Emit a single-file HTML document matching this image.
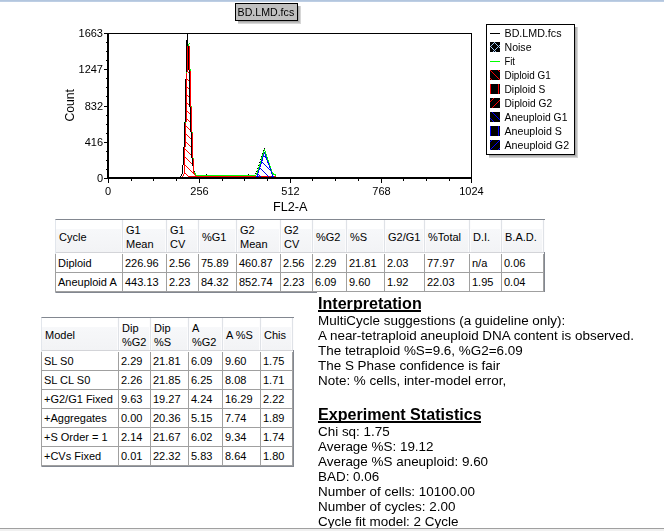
<!DOCTYPE html>
<html><head><meta charset="utf-8"><title>BD.LMD.fcs</title>
<style>
html,body{margin:0;padding:0;background:#fff;}
body{width:664px;height:531px;position:relative;overflow:hidden;font-family:"Liberation Sans",Arial,sans-serif;color:#000;}
.top{position:absolute;left:0;top:0;width:664px;height:2px;background:linear-gradient(#b3c6de 0,#b3c6de 50%,#bdcee4 50%,#bdcee4 100%);}
.bot1{position:absolute;left:0;top:528px;width:664px;height:1px;background:#a0a0a0;}
.bot2{position:absolute;left:0;top:529px;width:664px;height:2px;background:#f0f0f0;}
.lv{position:absolute;background:#fff;border-top:1px solid #828790;border-left:1px solid #e2e6ec;border-right:1px solid #828790;border-bottom:1px solid #828790;box-sizing:border-box;font-size:11px;line-height:14px;}
.hd{position:absolute;left:0;top:0;background:linear-gradient(#fff 0,#fff 28%,#f7f8fa 28%,#f2f3f5 100%);border-bottom:1px solid #d3d4d8;box-sizing:border-box;}
.hc{position:absolute;top:0;height:100%;box-sizing:border-box;border-right:1px solid #dfe2e7;box-shadow:1px 0 0 #fcfcfd, inset -1px 0 0 #fcfcfd;display:flex;align-items:center;padding:2px 0 0 3px;}
.c{position:absolute;box-sizing:border-box;border-right:1px solid #a0a0a0;border-bottom:1px solid #a0a0a0;padding:2px 0 0 2px;white-space:nowrap;overflow:hidden;}
.gl{position:absolute;background:#a0a0a0;}
.gb{position:absolute;background:#d0d0d0;}
.b{font-size:13.45px;}
.h{font-size:16.1px;font-weight:bold;}
</style></head><body>
<div class="top"></div>
<svg width="664" height="215" viewBox="0 0 664 215" style="position:absolute;left:0;top:0;will-change:transform" shape-rendering="crispEdges" font-family="Liberation Sans, Arial, sans-serif" font-size="11" fill="#000">
<defs><pattern id="hr" width="8" height="8" patternUnits="userSpaceOnUse"><rect x="0" y="4" width="1" height="1" fill="#f00"/><rect x="1" y="5" width="1" height="1" fill="#f00"/><rect x="2" y="6" width="1" height="1" fill="#f00"/><rect x="3" y="7" width="1" height="1" fill="#f00"/><rect x="4" y="0" width="1" height="1" fill="#f00"/><rect x="5" y="1" width="1" height="1" fill="#f00"/><rect x="6" y="2" width="1" height="1" fill="#f00"/><rect x="7" y="3" width="1" height="1" fill="#f00"/></pattern><pattern id="hb" width="8" height="8" patternUnits="userSpaceOnUse"><rect x="0" y="4" width="1" height="1" fill="#00f"/><rect x="1" y="5" width="1" height="1" fill="#00f"/><rect x="2" y="6" width="1" height="1" fill="#00f"/><rect x="3" y="7" width="1" height="1" fill="#00f"/><rect x="4" y="0" width="1" height="1" fill="#00f"/><rect x="5" y="1" width="1" height="1" fill="#00f"/><rect x="6" y="2" width="1" height="1" fill="#00f"/><rect x="7" y="3" width="1" height="1" fill="#00f"/></pattern></defs>
<polygon points="186,72 186,122 185,122 185,147 184,147 184,174 183,174 183,176 182,176 182,177 197,177 197,176 196,176 196,175 195,175 195,173 194,173 194,158 193,158 193,132 192,132 192,107 191,107 191,72" fill="url(#hr)"/>
<path fill="#000" d="M180 176h1v1h-1zM181 174h1v2h-1zM182 165h1v9h-1zM183 147h1v18h-1zM184 122h1v25h-1zM185 79h1v43h-1zM186 40h1v32h-1zM187 34h1v12h-1zM188 46h1v24h-1zM189 70h1v37h-1zM190 107h1v25h-1zM191 132h1v26h-1zM192 158h1v8h-1zM194 171h1v1h-1zM206 174h1v1h-1zM248 174h1v1h-1z"/>
<path fill="#f00" d="M182 176h1v1h-1zM183 174h1v2h-1zM184 147h1v27h-1zM185 123h1v24h-1zM186 73h1v49h-1zM187 46h1v26h-1zM188 176h88v1h-88zM189 46h1v24h-1zM190 71h1v36h-1zM191 107h1v25h-1zM192 133h1v25h-1zM193 159h1v14h-1zM194 173h1v2h-1zM195 175h1v1h-1z"/>
<path fill="#0f0" d="M185 122h1v1h-1zM186 72h1v1h-1zM188 44h1v2h-1zM189 43h1v1h-1zM190 69h1v2h-1zM191 106h1v1h-1zM192 132h1v1h-1zM193 158h1v1h-1zM194 172h1v1h-1zM195 173h1v2h-1zM196 175h60v1h-60z"/>
<polygon points="257,177 264.5,152 273,177" fill="url(#hb)"/>
<g fill="none" stroke-width="1" stroke-linejoin="bevel"><polyline points="255.5,174.5 257,171 264.5,148.5" stroke="#000" stroke-dasharray="1.5,1.5"/><polyline points="255.5,175.5 257,173.5 264.5,149.5 272.5,173.5 276.5,175.5" stroke="#0f0"/><polyline points="257,176.5 264.5,152.5 273,176.5" stroke="#00f"/></g>
<path fill="#00f" d="M256 176h3v1h-3zM271 176h3v1h-3z"/>
<path fill="#000" d="M107 33h365v1h-365zM471 33h1v146h-1zM107 33h2v146h-2zM107 177h365v2h-365z"/><path fill="#000" d="M104 33h3v1h-3zM104 69h3v1h-3zM104 106h3v1h-3zM104 142h3v1h-3zM104 178h3v1h-3zM106 42h1v1h-1zM106 51h1v1h-1zM106 60h1v1h-1zM106 78h1v1h-1zM106 87h1v1h-1zM106 96h1v1h-1zM106 115h1v1h-1zM106 124h1v1h-1zM106 133h1v1h-1zM106 151h1v1h-1zM106 160h1v1h-1zM106 169h1v1h-1zM108 179h1v4h-1zM199 179h1v4h-1zM290 179h1v4h-1zM381 179h1v4h-1zM471 179h1v4h-1zM131 179h1v2h-1zM153 179h1v2h-1zM176 179h1v2h-1zM222 179h1v2h-1zM244 179h1v2h-1zM267 179h1v2h-1zM312 179h1v2h-1zM335 179h1v2h-1zM358 179h1v2h-1zM403 179h1v2h-1zM426 179h1v2h-1zM449 179h1v2h-1z"/>
<text x="103" y="37" text-anchor="end">1663</text><text x="103" y="73" text-anchor="end">1247</text><text x="103" y="110" text-anchor="end">832</text><text x="103" y="146" text-anchor="end">416</text><text x="103" y="182" text-anchor="end">0</text><text x="108" y="195" text-anchor="middle">0</text><text x="199.5" y="195" text-anchor="middle">256</text><text x="290.5" y="195" text-anchor="middle">512</text><text x="381.5" y="195" text-anchor="middle">768</text><text x="471.5" y="195" text-anchor="middle">1024</text><text x="273" y="211" font-size="13" textLength="34.5" lengthAdjust="spacingAndGlyphs">FL2-A</text><text transform="translate(74,121.5) rotate(-90)" font-size="13" textLength="32.5" lengthAdjust="spacingAndGlyphs">Count</text>
<rect x="575" y="27" width="1" height="129" fill="#a8a8a8"/><rect x="489" y="155" width="87" height="1" fill="#a8a8a8"/><rect x="576" y="27" width="1" height="130" fill="#bebebe"/><rect x="489" y="156" width="88" height="1" fill="#bebebe"/><rect x="577" y="27" width="1" height="131" fill="#d6d6d6"/><rect x="489" y="157" width="89" height="1" fill="#d6d6d6"/><rect x="486.5" y="24.5" width="88" height="130" fill="#fff" stroke="#000"/><text x="504.5" y="37" textLength="57" lengthAdjust="spacingAndGlyphs">BD.LMD.fcs</text><text x="504.5" y="51" textLength="27" lengthAdjust="spacingAndGlyphs">Noise</text><text x="504.5" y="65" textLength="10.5" lengthAdjust="spacingAndGlyphs">Fit</text><text x="504.5" y="79" textLength="46.3" lengthAdjust="spacingAndGlyphs">Diploid G1</text><text x="504.5" y="93" textLength="40.8" lengthAdjust="spacingAndGlyphs">Diploid S</text><text x="504.5" y="107" textLength="47.6" lengthAdjust="spacingAndGlyphs">Diploid G2</text><text x="504.5" y="121" textLength="63" lengthAdjust="spacingAndGlyphs">Aneuploid G1</text><text x="504.5" y="135" textLength="57.4" lengthAdjust="spacingAndGlyphs">Aneuploid S</text><text x="504.5" y="149" textLength="64.6" lengthAdjust="spacingAndGlyphs">Aneuploid G2</text><rect x="490" y="33" width="10" height="1" fill="#000"/><rect x="490" y="61" width="10" height="1" fill="#0f0"/><rect x="490" y="42" width="10" height="10" fill="#000"/><rect x="490" y="70" width="10" height="10" fill="#000"/><rect x="490" y="84" width="10" height="10" fill="#000"/><rect x="490" y="98" width="10" height="10" fill="#000"/><rect x="490" y="112" width="10" height="10" fill="#000"/><rect x="490" y="126" width="10" height="10" fill="#000"/><rect x="490" y="140" width="10" height="10" fill="#000"/><path fill="#a6caf0" d="M494 42h1v1h-1zM493 43h1v1h-1zM495 43h1v1h-1zM492 44h1v1h-1zM496 44h1v1h-1zM491 45h1v1h-1zM497 45h1v1h-1zM499 45h1v1h-1zM490 46h1v1h-1zM498 46h1v1h-1zM491 47h1v1h-1zM497 47h1v1h-1zM499 47h1v1h-1zM492 48h1v1h-1zM496 48h1v1h-1zM493 49h1v1h-1zM495 49h1v1h-1zM494 50h1v1h-1zM493 51h1v1h-1zM495 51h1v1h-1z"/><path fill="#f00" d="M490 70h1v1h-1zM498 70h1v1h-1zM491 71h1v1h-1zM499 71h1v1h-1zM492 72h1v1h-1zM493 73h1v1h-1zM494 74h1v1h-1zM495 75h1v1h-1zM496 76h1v1h-1zM497 77h1v1h-1zM490 78h1v1h-1zM498 78h1v1h-1zM491 79h1v1h-1zM499 79h1v1h-1z"/><path fill="#f00" d="M490 84h1v1h-1zM498 84h1v1h-1zM490 85h1v1h-1zM498 85h1v1h-1zM490 86h1v1h-1zM498 86h1v1h-1zM490 87h1v1h-1zM498 87h1v1h-1zM490 88h1v1h-1zM498 88h1v1h-1zM490 89h1v1h-1zM498 89h1v1h-1zM490 90h1v1h-1zM498 90h1v1h-1zM490 91h1v1h-1zM498 91h1v1h-1zM490 92h1v1h-1zM498 92h1v1h-1zM490 93h1v1h-1zM498 93h1v1h-1z"/><path fill="#f00" d="M493 98h1v1h-1zM492 99h1v1h-1zM491 100h1v1h-1zM499 100h1v1h-1zM490 101h1v1h-1zM498 101h1v1h-1zM497 102h1v1h-1zM496 103h1v1h-1zM495 104h1v1h-1zM494 105h1v1h-1zM493 106h1v1h-1zM492 107h1v1h-1z"/><path fill="#00f" d="M492 112h1v1h-1zM493 113h1v1h-1zM494 114h1v1h-1zM495 115h1v1h-1zM496 116h1v1h-1zM497 117h1v1h-1zM490 118h1v1h-1zM498 118h1v1h-1zM491 119h1v1h-1zM499 119h1v1h-1zM492 120h1v1h-1zM493 121h1v1h-1z"/><path fill="#00f" d="M490 126h1v1h-1zM498 126h1v1h-1zM490 127h1v1h-1zM498 127h1v1h-1zM490 128h1v1h-1zM498 128h1v1h-1zM490 129h1v1h-1zM498 129h1v1h-1zM490 130h1v1h-1zM498 130h1v1h-1zM490 131h1v1h-1zM498 131h1v1h-1zM490 132h1v1h-1zM498 132h1v1h-1zM490 133h1v1h-1zM498 133h1v1h-1zM490 134h1v1h-1zM498 134h1v1h-1zM490 135h1v1h-1zM498 135h1v1h-1z"/><path fill="#00f" d="M491 140h1v1h-1zM499 140h1v1h-1zM490 141h1v1h-1zM498 141h1v1h-1zM497 142h1v1h-1zM496 143h1v1h-1zM495 144h1v1h-1zM494 145h1v1h-1zM493 146h1v1h-1zM492 147h1v1h-1zM491 148h1v1h-1zM499 148h1v1h-1zM490 149h1v1h-1zM498 149h1v1h-1z"/>
<rect x="298" y="6" width="1" height="16" fill="#a8a8a8"/><rect x="238" y="21" width="61" height="1" fill="#a8a8a8"/><rect x="299" y="6" width="1" height="17" fill="#bebebe"/><rect x="238" y="22" width="62" height="1" fill="#bebebe"/><rect x="300" y="6" width="1" height="18" fill="#d6d6d6"/><rect x="238" y="23" width="63" height="1" fill="#d6d6d6"/><rect x="235.5" y="3.5" width="62" height="17" fill="#c0c0c0" stroke="#000"/> <text x="237.6" y="16" textLength="56.6" lengthAdjust="spacingAndGlyphs">BD.LMD.fcs</text>
</svg>
<div class="lv" style="left:55px;top:219px;width:490px;height:74px"><div class="hd" style="height:33px;width:488px"><div class="hc" style="left:0px;width:67px"><span>Cycle</span></div><div class="hc" style="left:67px;width:44px"><span>G1<br>Mean</span></div><div class="hc" style="left:111px;width:32px"><span>G1<br>CV</span></div><div class="hc" style="left:143px;width:38px"><span>%G1</span></div><div class="hc" style="left:181px;width:44px"><span>G2<br>Mean</span></div><div class="hc" style="left:225px;width:32px"><span>G2<br>CV</span></div><div class="hc" style="left:257px;width:34px"><span>%G2</span></div><div class="hc" style="left:291px;width:38px"><span>%S</span></div><div class="hc" style="left:329px;width:40px"><span>G2/G1</span></div><div class="hc" style="left:369px;width:45px"><span>%Total</span></div><div class="hc" style="left:414px;width:32px"><span>D.I.</span></div><div class="hc" style="left:446px;width:42px"><span>B.A.D.</span></div></div><div class="c" style="left:0px;top:34px;width:67px;height:19px">Diploid</div><div class="c" style="left:67px;top:34px;width:44px;height:19px">226.96</div><div class="c" style="left:111px;top:34px;width:32px;height:19px">2.56</div><div class="c" style="left:143px;top:34px;width:38px;height:19px">75.89</div><div class="c" style="left:181px;top:34px;width:44px;height:19px">460.87</div><div class="c" style="left:225px;top:34px;width:32px;height:19px">2.56</div><div class="c" style="left:257px;top:34px;width:34px;height:19px">2.29</div><div class="c" style="left:291px;top:34px;width:38px;height:19px">21.81</div><div class="c" style="left:329px;top:34px;width:40px;height:19px">2.03</div><div class="c" style="left:369px;top:34px;width:45px;height:19px">77.97</div><div class="c" style="left:414px;top:34px;width:32px;height:19px">n/a</div><div class="c" style="left:446px;top:34px;width:42px;height:19px">0.06</div><div class="c" style="left:0px;top:53px;width:67px;height:19px">Aneuploid A</div><div class="c" style="left:67px;top:53px;width:44px;height:19px">443.13</div><div class="c" style="left:111px;top:53px;width:32px;height:19px">2.23</div><div class="c" style="left:143px;top:53px;width:38px;height:19px">84.32</div><div class="c" style="left:181px;top:53px;width:44px;height:19px">852.74</div><div class="c" style="left:225px;top:53px;width:32px;height:19px">2.23</div><div class="c" style="left:257px;top:53px;width:34px;height:19px">6.09</div><div class="c" style="left:291px;top:53px;width:38px;height:19px">9.60</div><div class="c" style="left:329px;top:53px;width:40px;height:19px">1.92</div><div class="c" style="left:369px;top:53px;width:45px;height:19px">22.03</div><div class="c" style="left:414px;top:53px;width:32px;height:19px">1.95</div><div class="c" style="left:446px;top:53px;width:42px;height:19px">0.04</div><div class="gl" style="left:-1px;top:34px;width:1px;height:38px"></div></div>
<div class="lv" style="left:41px;top:317px;width:253px;height:150px"><div class="hd" style="height:33px;width:251px"><div class="hc" style="left:0px;width:77px"><span>Model</span></div><div class="hc" style="left:77px;width:32px"><span>Dip<br>%G2</span></div><div class="hc" style="left:109px;width:38px"><span>Dip<br>%S</span></div><div class="hc" style="left:147px;width:34px"><span>A<br>%G2</span></div><div class="hc" style="left:181px;width:38px"><span>A %S</span></div><div class="hc" style="left:219px;width:32px"><span>Chis</span></div></div><div class="c" style="left:0px;top:34px;width:77px;height:19px">SL S0</div><div class="c" style="left:77px;top:34px;width:32px;height:19px">2.29</div><div class="c" style="left:109px;top:34px;width:38px;height:19px">21.81</div><div class="c" style="left:147px;top:34px;width:34px;height:19px">6.09</div><div class="c" style="left:181px;top:34px;width:38px;height:19px">9.60</div><div class="c" style="left:219px;top:34px;width:32px;height:19px">1.75</div><div class="c" style="left:0px;top:53px;width:77px;height:19px">SL CL S0</div><div class="c" style="left:77px;top:53px;width:32px;height:19px">2.26</div><div class="c" style="left:109px;top:53px;width:38px;height:19px">21.85</div><div class="c" style="left:147px;top:53px;width:34px;height:19px">6.25</div><div class="c" style="left:181px;top:53px;width:38px;height:19px">8.08</div><div class="c" style="left:219px;top:53px;width:32px;height:19px">1.71</div><div class="c" style="left:0px;top:72px;width:77px;height:19px">+G2/G1 Fixed</div><div class="c" style="left:77px;top:72px;width:32px;height:19px">9.63</div><div class="c" style="left:109px;top:72px;width:38px;height:19px">19.27</div><div class="c" style="left:147px;top:72px;width:34px;height:19px">4.24</div><div class="c" style="left:181px;top:72px;width:38px;height:19px">16.29</div><div class="c" style="left:219px;top:72px;width:32px;height:19px">2.22</div><div class="c" style="left:0px;top:91px;width:77px;height:19px">+Aggregates</div><div class="c" style="left:77px;top:91px;width:32px;height:19px">0.00</div><div class="c" style="left:109px;top:91px;width:38px;height:19px">20.36</div><div class="c" style="left:147px;top:91px;width:34px;height:19px">5.15</div><div class="c" style="left:181px;top:91px;width:38px;height:19px">7.74</div><div class="c" style="left:219px;top:91px;width:32px;height:19px">1.89</div><div class="c" style="left:0px;top:110px;width:77px;height:19px">+S Order = 1</div><div class="c" style="left:77px;top:110px;width:32px;height:19px">2.14</div><div class="c" style="left:109px;top:110px;width:38px;height:19px">21.67</div><div class="c" style="left:147px;top:110px;width:34px;height:19px">6.02</div><div class="c" style="left:181px;top:110px;width:38px;height:19px">9.34</div><div class="c" style="left:219px;top:110px;width:32px;height:19px">1.74</div><div class="c" style="left:0px;top:129px;width:77px;height:19px">+CVs Fixed</div><div class="c" style="left:77px;top:129px;width:32px;height:19px">0.01</div><div class="c" style="left:109px;top:129px;width:38px;height:19px">22.32</div><div class="c" style="left:147px;top:129px;width:34px;height:19px">5.83</div><div class="c" style="left:181px;top:129px;width:38px;height:19px">8.64</div><div class="c" style="left:219px;top:129px;width:32px;height:19px">1.80</div><div class="gl" style="left:-1px;top:34px;width:1px;height:114px"></div></div>
<svg width="664" height="531" viewBox="0 0 664 531" style="position:absolute;left:0;top:0;pointer-events:none" font-family="Liberation Sans, Arial, sans-serif" fill="#000"><rect x="317" y="292" width="240" height="1" fill="#fff"/><text class="h" x="318" y="309.2">Interpretation</text><rect x="318" y="310" width="103" height="2" fill="#000"/><text class="b" x="318" y="325">MultiCycle suggestions (a guideline only):</text><text class="b" x="318" y="340">A near-tetraploid aneuploid DNA content is observed.</text><text class="b" x="318" y="354.7">The tetraploid %S=9.6, %G2=6.09</text><text class="b" x="318" y="369.7">The S Phase confidence is fair</text><text class="b" x="318" y="384.7">Note: % cells, inter-model error,</text><text class="h" x="318" y="420.2">Experiment Statistics</text><rect x="318" y="421" width="163" height="2" fill="#000"/><text class="b" x="318" y="435.5">Chi sq: 1.75</text><text class="b" x="318" y="450.5">Average %S: 19.12</text><text class="b" x="318" y="465.5">Average %S aneuploid: 9.60</text><text class="b" x="318" y="480.5">BAD: 0.06</text><text class="b" x="318" y="495.5">Number of cells: 10100.00</text><text class="b" x="318" y="510.5">Number of cycles: 2.00</text><text class="b" x="318" y="525.5">Cycle fit model: 2 Cycle</text></svg>
<div class="bot1"></div><div class="bot2"></div>
</body></html>
